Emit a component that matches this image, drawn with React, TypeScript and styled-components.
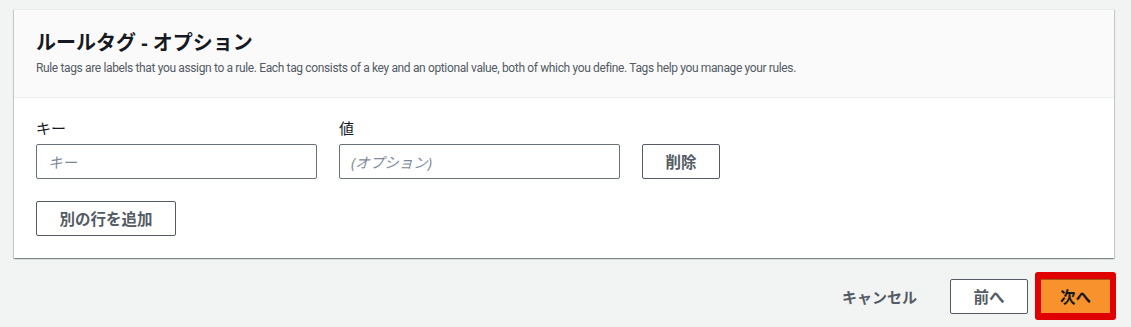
import React, {FC} from 'react';
import styled, {createGlobalStyle} from 'styled-components';

const FONT = `"Noto Sans", "Noto Sans CJK JP", sans-serif`;
const DESC_FONT = `Roboto, "Noto Sans", sans-serif`;

const GlobalStyle = createGlobalStyle`
  html, body {
    margin: 0;
    padding: 0;
    background: #f2f3f3;
    font-family: ${FONT};
  }
`;

const TEXTS = {
  TITLE: 'ルールタグ - オプション',
  DESCRIPTION:
    'Rule tags are labels that you assign to a rule. Each tag consists of a key and an optional value, both of which you define. Tags help you manage your rules.',
  KEY: 'キー',
  VALUE: '値',
  OPTIONAL: '(オプション)',
  REMOVE: '削除',
  ADD_ROW: '別の行を追加',
  CANCEL: 'キャンセル',
  PREV: '前へ',
  NEXT: '次へ',
};

const App: FC = () => {
  return (
    <>
      <GlobalStyle />
      <Page>
        <Card>
          <Header>
            <Title>{TEXTS.TITLE}</Title>
            <Description>{TEXTS.DESCRIPTION}</Description>
          </Header>
          <Body>
            <TagRow>
              <Field>
                <Label>{TEXTS.KEY}</Label>
                <Input type="text" placeholder={TEXTS.KEY} />
              </Field>
              <Field>
                <Label>{TEXTS.VALUE}</Label>
                <Input type="text" placeholder={TEXTS.OPTIONAL} />
              </Field>
              <RemoveButton>{TEXTS.REMOVE}</RemoveButton>
            </TagRow>
            <AddButton>{TEXTS.ADD_ROW}</AddButton>
          </Body>
        </Card>
        <Footer>
          <LinkButton>{TEXTS.CANCEL}</LinkButton>
          <NormalButton>{TEXTS.PREV}</NormalButton>
          <PrimaryButton>{TEXTS.NEXT}</PrimaryButton>
        </Footer>
      </Page>
    </>
  );
};

const Page = styled.div`
  display: flex;
  flex-direction: column;
  padding: 9px 17px 0 14px;
`;

const Card = styled.div`
  background: #ffffff;
  border-top: 1px solid #eaeded;
  box-shadow: 0 1px 1px 0 rgba(0, 28, 36, 0.3), 1px 1px 1px 0 rgba(0, 28, 36, 0.15),
    -1px 1px 1px 0 rgba(0, 28, 36, 0.15);
`;

const Header = styled.div`
  display: flex;
  flex-direction: column;
  gap: 2px;
  height: 88px;
  box-sizing: border-box;
  padding: 18px 22px 0;
  background: #fafafa;
  border-bottom: 1px solid #eaeded;
`;

const Title = styled.h2`
  margin: 0;
  font-size: 20px;
  line-height: 30px;
  font-weight: 700;
  color: #16191f;
`;

const Description = styled.p`
  margin: 0;
  font-family: ${DESC_FONT};
  font-size: 12px;
  line-height: 16px;
  letter-spacing: -0.36px;
  color: #545b64;
`;

const Body = styled.div`
  display: flex;
  flex-direction: column;
  align-items: flex-start;
  gap: 22px;
  padding: 20px 22px 22px;
`;

const TagRow = styled.div`
  display: flex;
  align-items: flex-end;
  gap: 22px;
`;

const Field = styled.div`
  display: flex;
  flex-direction: column;
  gap: 6px;
`;

const Label = styled.label`
  font-size: 15px;
  line-height: 20px;
  color: #16191f;
`;

const Input = styled.input`
  width: 281px;
  height: 35px;
  box-sizing: border-box;
  padding: 0 11px;
  border: 1px solid #687078;
  border-radius: 2px;
  background: #ffffff;
  font-family: ${FONT};
  font-size: 14.5px;
  color: #16191f;

  &::placeholder {
    color: #7d8998;
    font-style: italic;
  }
`;

const BaseButton = styled.button`
  display: inline-flex;
  align-items: center;
  justify-content: center;
  height: 35px;
  box-sizing: border-box;
  padding: 0 20px;
  border: 1px solid #545b64;
  border-radius: 2px;
  background: #ffffff;
  font-family: ${FONT};
  font-size: 15.5px;
  font-weight: 700;
  white-space: nowrap;
  color: #545b64;
  cursor: pointer;
`;

const RemoveButton = styled(BaseButton)`
  width: 78px;
`;

const AddButton = styled(BaseButton)`
  width: 140px;
`;

const Footer = styled.div`
  display: flex;
  justify-content: flex-end;
  align-items: center;
  gap: 7px;
  padding-top: 14px;
  margin-right: -2px;
`;

const LinkButton = styled(BaseButton)`
  border-color: transparent;
  background: transparent;
  font-size: 15px;
  margin-right: 5px;
`;

const NormalButton = styled(BaseButton)`
  width: 78px;
`;

const PrimaryButton = styled(BaseButton)`
  width: 81px;
  height: 48px;
  padding: 0;
  border: 6px solid #e00000;
  border-top-width: 7px;
  border-bottom-width: 7px;
  border-radius: 3px;
  background: #f7922d;
  color: #16191f;
  box-shadow: inset 0 1px 0 #a65b13;
`;

export default App;
